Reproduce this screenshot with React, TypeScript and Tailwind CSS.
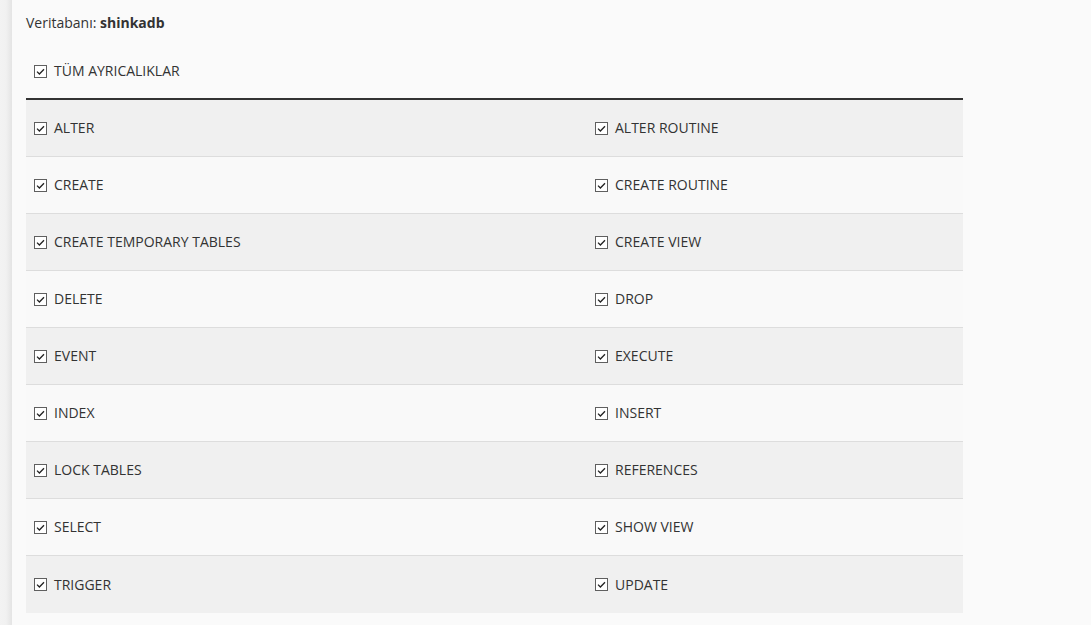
import React from "react";

const privileges: [string, string][] = [
  ["ALTER", "ALTER ROUTINE"],
  ["CREATE", "CREATE ROUTINE"],
  ["CREATE TEMPORARY TABLES", "CREATE VIEW"],
  ["DELETE", "DROP"],
  ["EVENT", "EXECUTE"],
  ["INDEX", "INSERT"],
  ["LOCK TABLES", "REFERENCES"],
  ["SELECT", "SHOW VIEW"],
  ["TRIGGER", "UPDATE"],
];

const CheckBox = () => (
  <span className="flex h-[13px] w-[13px] shrink-0 items-center justify-center border border-[#5f5f5f] bg-white">
    <svg width="9" height="7" viewBox="0 0 9 7" fill="none">
      <path d="M1 3.6 L3.4 6 L8 1.2" stroke="#222" strokeWidth="1.3" />
    </svg>
  </span>
);

const Priv = ({ label }: { label: string }) => (
  <label className="flex items-center gap-[7px] pl-2">
    <CheckBox />
    <span>{label}</span>
  </label>
);

export default function App() {
  return (
    <div
      className="flex min-h-[625px] w-full bg-[#fafafa] text-[14px] leading-5 text-[#333]"
      style={{ fontFamily: '"Open Sans", "Liberation Sans", sans-serif' }}
    >
      <div className="w-[12px] shrink-0 bg-gradient-to-r from-[#f3f3f3] via-[#f1f1f1] to-[#e4e4e4]" />
      <div className="w-[951px] pl-[14px] pt-[13px]">
        <p>
          Veritabanı: <strong className="font-bold">shinkadb</strong>
        </p>
        <div className="mt-[11px] flex h-14 items-center border-b-2 border-[#333]">
          <Priv label="TÜM AYRICALIKLAR" />
        </div>
        <div>
          {privileges.map(([a, b], i) => (
            <div
              key={a}
              className={`grid h-[57px] grid-cols-[561px_1fr] items-center ${
                i % 2 === 0 ? "bg-[#f0f0f0]" : "bg-[#f9f9f9]"
              } ${i < privileges.length - 1 ? "border-b border-[#dddddd]" : ""}`}
            >
              <Priv label={a} />
              <Priv label={b} />
            </div>
          ))}
        </div>
      </div>
    </div>
  );
}
